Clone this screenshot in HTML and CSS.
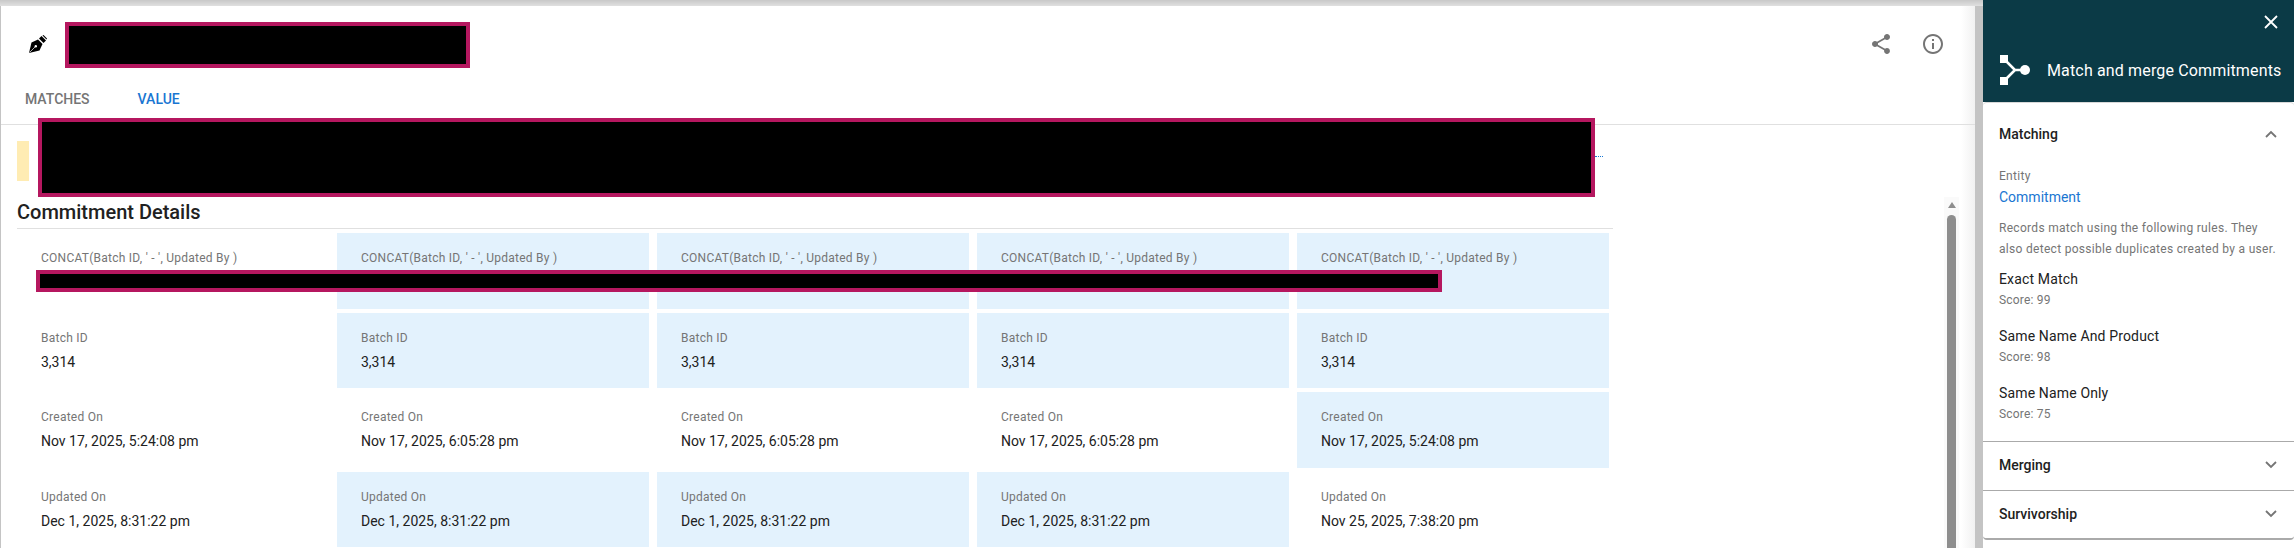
FILE: index.html
```html
<!DOCTYPE html>
<html lang="en">
<head>
    <meta charset="UTF-8">
    <title>Commitment Details</title>
    <link rel="stylesheet" href="styles.css">
</head>
<body>
<div class="page">
    <div class="main">
        <div class="title-bar">
            <svg class="pen-icon" viewBox="0 0 18 18" width="18" height="18">
                <path d="M0 18 L2.500 7.500 L9 4.500 L13.500 9 L10.500 15.500 Z" fill="#000"/>
                <path d="M0.600 17.400 L6.200 11.800" stroke="#fff" stroke-width="0.700"/>
                <circle cx="6.800" cy="11.200" r="1.200" fill="#fff"/>
                <path d="M10 3.500 L12.500 1 L17 5.500 L14.500 8 Z" fill="#000"/>
                <path d="M13.500 0.500 L14.500 0 L18 3.500 L17.500 4.500 Z" fill="#000"/>
            </svg>
            <div class="redact title-redact"></div>
            <div class="title-actions">
                <svg class="action-icon" viewBox="0 0 24 24" width="24" height="24">
                    <path d="M18 16.080c-.76 0-1.440.3-1.960.77L8.910 12.700c.05-.23.09-.46.09-.7s-.04-.47-.09-.7l7.050-4.110c.54.5 1.250.81 2.040.81 1.660 0 3-1.340 3-3s-1.340-3-3-3-3 1.340-3 3c0 .24.040.47.090.7L8.040 9.810C7.500 9.310 6.790 9 6 9c-1.660 0-3 1.340-3 3s1.340 3 3 3c.79 0 1.500-.31 2.040-.81l7.120 4.160c-.05.21-.08.43-.08.65 0 1.610 1.310 2.920 2.920 2.920s2.920-1.310 2.920-2.920-1.310-2.920-2.920-2.920z" fill="#757575"/>
                </svg>
                <svg class="action-icon" viewBox="0 0 24 24" width="24" height="24">
                    <path d="M11 7h2v2h-2zm0 4h2v6h-2zm1-9C6.480 2 2 6.480 2 12s4.480 10 10 10 10-4.480 10-10S17.520 2 12 2zm0 18c-4.410 0-8-3.590-8-8s3.590-8 8-8 8 3.590 8 8-3.590 8-8 8z" fill="#757575"/>
                </svg>
            </div>
        </div>
        <div class="tabs">
            <span class="tab">MATCHES</span>
            <span class="tab tab-active">VALUE</span>
        </div>
        <div class="content">
            <div class="clip">
                <div class="banner-dots"></div>
                <div class="banner">
                    <div class="banner-mark"></div>
                </div>
                <h2 class="section-title">Commitment Details</h2>
                <div class="compare">
                    <div class="redact concat-redact"></div>

                    <div class="cell"><div class="label">CONCAT(Batch ID, ' - ', Updated By )</div></div>
                    <div class="cell diff"><div class="label">CONCAT(Batch ID, ' - ', Updated By )</div></div>
                    <div class="cell diff"><div class="label">CONCAT(Batch ID, ' - ', Updated By )</div></div>
                    <div class="cell diff"><div class="label">CONCAT(Batch ID, ' - ', Updated By )</div></div>
                    <div class="cell diff"><div class="label">CONCAT(Batch ID, ' - ', Updated By )</div></div>

                    <div class="cell"><div class="label">Batch ID</div><div class="value">3,314</div></div>
                    <div class="cell diff"><div class="label">Batch ID</div><div class="value">3,314</div></div>
                    <div class="cell diff"><div class="label">Batch ID</div><div class="value">3,314</div></div>
                    <div class="cell diff"><div class="label">Batch ID</div><div class="value">3,314</div></div>
                    <div class="cell diff"><div class="label">Batch ID</div><div class="value">3,314</div></div>

                    <div class="cell"><div class="label">Created On</div><div class="value">Nov 17, 2025, 5:24:08 pm</div></div>
                    <div class="cell"><div class="label">Created On</div><div class="value">Nov 17, 2025, 6:05:28 pm</div></div>
                    <div class="cell"><div class="label">Created On</div><div class="value">Nov 17, 2025, 6:05:28 pm</div></div>
                    <div class="cell"><div class="label">Created On</div><div class="value">Nov 17, 2025, 6:05:28 pm</div></div>
                    <div class="cell diff"><div class="label">Created On</div><div class="value">Nov 17, 2025, 5:24:08 pm</div></div>

                    <div class="cell"><div class="label">Updated On</div><div class="value">Dec 1, 2025, 8:31:22 pm</div></div>
                    <div class="cell diff"><div class="label">Updated On</div><div class="value">Dec 1, 2025, 8:31:22 pm</div></div>
                    <div class="cell diff"><div class="label">Updated On</div><div class="value">Dec 1, 2025, 8:31:22 pm</div></div>
                    <div class="cell diff"><div class="label">Updated On</div><div class="value">Dec 1, 2025, 8:31:22 pm</div></div>
                    <div class="cell"><div class="label">Updated On</div><div class="value">Nov 25, 2025, 7:38:20 pm</div></div>
                </div>
                <div class="scrollbar">
                    <div class="scroll-arrow"></div>
                    <div class="scroll-thumb"></div>
                </div>
            </div>
            <div class="redact banner-redact"></div>
        </div>
    </div>

    <div class="side">
        <div class="side-head">
            <div class="side-close">
                <svg viewBox="0 0 14 14" width="14" height="14">
                    <path d="M1 1 L13 13 M13 1 L1 13" stroke="#fff" stroke-width="1.800" fill="none"/>
                </svg>
            </div>
            <div class="side-title">
                <svg class="merge-icon" viewBox="0 0 30 30" width="30" height="30">
                    <rect x="0" y="0" width="8" height="8" fill="#fff"/>
                    <rect x="0" y="22" width="8" height="8" fill="#fff"/>
                    <circle cx="25" cy="15" r="5" fill="#fff"/>
                    <path d="M5 5 L15 15 L5 25 M15 15 H22" stroke="#fff" stroke-width="2.600" fill="none"/>
                </svg>
                <span>Match and merge Commitments</span>
            </div>
        </div>
        <div class="side-card">
            <div class="acc-head">
                <span>Matching</span>
                <svg class="chevron" viewBox="0 0 12 8" width="12" height="8"><path d="M1 7 L6 2 L11 7" stroke="#757575" stroke-width="1.800" fill="none"/></svg>
            </div>
            <div class="acc-body">
                <div class="side-label">Entity</div>
                <a class="side-link" href="#">Commitment</a>
                <p class="side-desc">Records match using the following rules. They<br>also detect possible duplicates created by a user.</p>
                <div class="rule"><div class="rule-name">Exact Match</div><div class="rule-score">Score: 99</div></div>
                <div class="rule"><div class="rule-name">Same Name And Product</div><div class="rule-score">Score: 98</div></div>
                <div class="rule"><div class="rule-name">Same Name Only</div><div class="rule-score">Score: 75</div></div>
            </div>
            <div class="acc-head acc-closed">
                <span>Merging</span>
                <svg class="chevron" viewBox="0 0 12 8" width="12" height="8"><path d="M1 1 L6 6 L11 1" stroke="#757575" stroke-width="1.800" fill="none"/></svg>
            </div>
            <div class="acc-head acc-closed">
                <span>Survivorship</span>
                <svg class="chevron" viewBox="0 0 12 8" width="12" height="8"><path d="M1 1 L6 6 L11 1" stroke="#757575" stroke-width="1.800" fill="none"/></svg>
            </div>
        </div>
    </div>
</div>
</body>
</html>
```

FILE: styles.css
```css
* {
    margin: 0;
    padding: 0;
    box-sizing: border-box;
}

html, body {
    width: 2294px;
    height: 548px;
    overflow: hidden;
}

body {
    font-family: Roboto, "Liberation Sans", sans-serif;
    background-color: #fff;
    color: #212121;
}

.page {
    display: flex;
    height: 548px;
    background: linear-gradient(#c8c8c8, #e0e0e0) 0 0 / 100% 6px no-repeat, #c4c4c4;
}

.main {
    width: 1974px;
    height: 542px;
    margin-top: 6px;
    margin-left: 1px;
    background: linear-gradient(to right, #fff 1960px, #f1f1f1 1974px);
    display: flex;
    flex-direction: column;
}

.redact {
    position: absolute;
    background-color: #000;
    border: 4px solid #b5175f;
}

.title-bar {
    height: 62px;
    display: flex;
    align-items: center;
    padding: 14px 28px 0 28px;
    position: relative;
}

.title-redact {
    left: 64px;
    top: 16px;
    width: 405px;
    height: 46px;
}

.title-actions {
    margin-left: auto;
    display: flex;
    gap: 28px;
    padding-right: 2px;
}

.tabs {
    height: 57px;
    display: flex;
    align-items: center;
    gap: 48px;
    padding: 6px 0 0 24px;
    border-bottom: 1px solid #e0e0e0;
    flex: none;
}

.tab {
    font-size: 14px;
    font-weight: 500;
    color: #757575;
}

.tab-active {
    color: #1976d2;
}

.content {
    flex: 1;
    position: relative;
    min-height: 0;
}

.clip {
    height: 100%;
    padding-left: 16px;
    position: relative;
    overflow: hidden;
}

.banner-redact {
    left: 37px;
    top: -7px;
    width: 1557px;
    height: 79px;
}

.banner {
    height: 72px;
    padding-top: 16px;
}

.banner-mark {
    width: 12px;
    height: 40px;
    background-color: #ffecb3;
}

.banner-dots {
    position: absolute;
    left: 1594px;
    top: 31px;
    width: 8px;
    border-top: 1px dotted #1976d2;
}

.section-title {
    font-size: 20px;
    font-weight: 500;
    line-height: 24px;
    height: 32px;
    padding-top: 3px;
    width: 1596px;
    border-bottom: 1px solid #e0e0e0;
    color: #212121;
}

.compare {
    position: relative;
    display: grid;
    grid-template-columns: repeat(5, 312px);
    grid-auto-rows: 75.500px;
    column-gap: 8px;
    row-gap: 4px;
    margin-top: 4px;
}

.concat-redact {
    left: 19px;
    top: 37px;
    width: 1406px;
    height: 22px;
}

.cell {
    padding: 17px 24px 0;
}

.diff {
    background-color: #e3f2fd;
}

.label {
    font-size: 12px;
    line-height: 16px;
    letter-spacing: 0.25px;
    color: #757575;
}

.value {
    font-size: 14px;
    line-height: 20px;
    color: #212121;
    margin-top: 6px;
}

.scrollbar {
    position: absolute;
    left: 1943px;
    top: 72px;
    bottom: 0;
    width: 15px;
    background-color: #fafafa;
    padding: 5px 3px 0;
}

.scroll-arrow {
    width: 0;
    height: 0;
    margin: 0 auto;
    border-left: 4.500px solid transparent;
    border-right: 4.500px solid transparent;
    border-bottom: 6px solid #8e8e8e;
}

.scroll-thumb {
    height: 400px;
    margin-top: 7px;
    background-color: #8e8e8e;
    border-radius: 5px 5px 0 0;
}

.side {
    width: 311px;
    margin-left: 8px;
    flex: none;
    background-color: #fff;
}

.side-head {
    height: 102px;
    background-color: #0b3a46;
    color: #fff;
    padding: 15px 0 0 17px;
}

.side-close {
    display: flex;
    justify-content: flex-end;
    padding-right: 16px;
    height: 40px;
}

.side-title {
    display: flex;
    align-items: center;
    gap: 17px;
    font-size: 16px;
    letter-spacing: 0.15px;
    white-space: nowrap;
}

.merge-icon {
    flex: none;
}

.side-card {
    height: 438px;
    border-top: 1px solid #d8d8d8;
    border-bottom: 2px solid #aaa;
    border-radius: 4px;
}

.acc-head {
    height: 58px;
    display: flex;
    align-items: center;
    justify-content: space-between;
    padding: 14px 17px 10px 16px;
    font-size: 14px;
    font-weight: 500;
    color: #212121;
}

.acc-closed {
    border-top: 1px solid #aaa;
    padding: 0 17px 2px 16px;
    height: 49px;
}

.acc-closed:last-child {
    height: 48px;
}

.acc-body {
    padding: 7px 8px 0 16px;
    height: 280px;
}

.side-label {
    font-size: 12px;
    line-height: 16px;
    letter-spacing: 0.3px;
    color: #757575;
}

.side-link {
    display: block;
    font-size: 14px;
    line-height: 20px;
    color: #1976d2;
    text-decoration: none;
    margin-top: 3px;
}

.side-desc {
    font-size: 12px;
    line-height: 21px;
    letter-spacing: 0.3px;
    color: #757575;
    margin-top: 11px;
}

.rule {
    margin-top: 9px;
    height: 48px;
}

.rule-name {
    font-size: 14px;
    line-height: 20px;
    letter-spacing: 0.15px;
    color: #212121;
}

.rule-score {
    font-size: 12px;
    line-height: 16px;
    letter-spacing: 0.2px;
    color: #757575;
    margin-top: 3px;
}
```
